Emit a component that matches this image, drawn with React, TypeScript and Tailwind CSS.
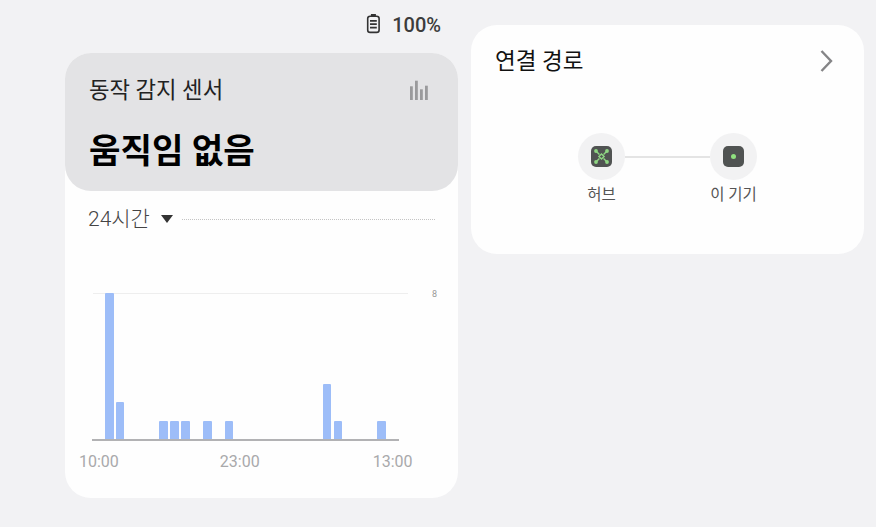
const bars = [8, 2, 0, 0, 0, 1, 1, 1, 0, 1, 0, 1, 0, 0, 0, 0, 0, 0, 0, 0, 3, 1, 0, 0, 0, 1];
const UNIT = 18.3;

function BatteryIcon() {
  return (
    <svg width="16" height="22" viewBox="0 0 16 22" fill="none" stroke="#333" strokeWidth="1.6">
      <path d="M4.9 1h5v2.2h-5z" fill="#333" stroke="none" />
      <rect x="1.7" y="3.2" width="11.4" height="16.2" rx="2.4" />
      <path d="M4 7.8h6.8M4 11.2h6.8M4 14.6h6.8" strokeWidth="1.7" />
    </svg>
  );
}

function StatsIcon() {
  return (
    <svg width="20" height="20" viewBox="0 0 20 20" fill="#9a9a9c">
      <rect x="1" y="6.3" width="2.8" height="13.7" />
      <rect x="6" y="0.7" width="2.8" height="19.3" />
      <rect x="11" y="9.3" width="2.8" height="10.7" />
      <rect x="16" y="5.7" width="2.8" height="14.3" />
    </svg>
  );
}

function HubIcon() {
  return (
    <div className="flex h-[21px] w-[21px] items-center justify-center rounded-[5px] bg-[#505352]">
      <svg width="17" height="17" viewBox="0 0 17 17" fill="#8fd683" stroke="#8fd683" strokeWidth="1.4">
        <path d="M3 3l3.4 3.4M14 3l-3.4 3.4M3 14l3.4-3.4M14 14l-3.4-3.4M8.5 5.9l2.6 2.6-2.6 2.6-2.6-2.6z" fill="none" />
        <circle cx="3" cy="3" r="1.9" stroke="none" />
        <circle cx="14" cy="3" r="1.9" stroke="none" />
        <circle cx="3" cy="14" r="1.9" stroke="none" />
        <circle cx="14" cy="14" r="1.9" stroke="none" />
      </svg>
    </div>
  );
}

function DeviceIcon() {
  return (
    <div className="flex h-[21px] w-[21px] items-center justify-center rounded-[5px] bg-[#505352]">
      <div className="h-[5px] w-[5px] rounded-full bg-[#8fe07f]" />
    </div>
  );
}

function Node({ label, children }: { label: string; children: React.ReactNode }) {
  return (
    <div className="flex w-[47px] flex-col items-center">
      <div className="flex h-[47px] w-[47px] items-center justify-center rounded-full bg-[#f2f2f3]">{children}</div>
      <div className="mt-[3px] whitespace-nowrap text-[15.5px] leading-[24px] text-[#555]">{label}</div>
    </div>
  );
}

export default function App() {
  return (
    <div className="flex h-[527px] w-[876px] gap-[13px] overflow-hidden bg-[#f2f2f4] pl-[65px] font-['Roboto','Noto_Sans_CJK_KR',sans-serif]">
      <div className="flex w-[393px] flex-col">
        <div className="flex h-[53px] items-start justify-end gap-[10px] pr-[17px] pt-[13px]">
          <BatteryIcon />
          <span className="text-[20px] font-medium leading-[24px] text-[#3c3c3c]">100%</span>
        </div>

        <div className="h-[445px] rounded-[26px] bg-[#fefefe]">
          <div className="flex h-[138px] flex-col rounded-[26px] bg-[#e3e3e5] px-[24px] pt-[21px]">
            <div className="flex items-center justify-between pr-[5px]">
              <span className="text-[22.3px] leading-[32px] text-[#222]">동작 감지 센서</span>
              <StatsIcon />
            </div>
            <div className="mt-[21px] text-[34.2px] font-bold leading-[48px] text-black">움직임 없음</div>
          </div>

          <div className="flex items-center pl-[23px] pr-[23px] pt-[13px]">
            <span className="text-[21px] font-light leading-[30px] text-[#444]">24시간</span>
            <svg className="ml-[11px]" width="12" height="8" viewBox="0 0 12 8" fill="#333">
              <path d="M0 0h12L6 8z" />
            </svg>
            <div className="ml-[9px] flex-1 border-t border-dotted border-[#c4c4c4]" />
          </div>

          <div className="mt-[59px]">
            <div className="flex h-px items-center pl-[28px]">
              <div className="h-px w-[315px] shrink-0 bg-[#eeeeee]" />
              <span className="ml-[24px] text-[9px] leading-[10px] text-[#999]">8</span>
            </div>
            <div className="ml-[27px] flex h-[147px] w-[307px] items-end border-b-2 border-[#b2b2b4] pl-[13px]">
              {bars.map((v, i) => (
                <div key={i} className="w-[10.9px] shrink-0">
                  {v > 0 && <div className="w-[8.6px] rounded-t-[1px] bg-[#9dbdf8]" style={{ height: v * UNIT }} />}
                </div>
              ))}
            </div>
            <div className="mt-[9px] flex pl-[14px] text-[16px] leading-[24px] text-[#a9a9ab]">
              <span>10:00</span>
              <span className="ml-[101px]">23:00</span>
              <span className="ml-[113px]">13:00</span>
            </div>
          </div>
        </div>
      </div>

      <div className="mt-[25px] h-[229px] w-[393px] rounded-[26px] bg-[#fefefe]">
        <div className="flex items-center justify-between pl-[24px] pr-[30px] pt-[20px]">
          <span className="text-[22.5px] leading-[32px] text-[#111]">연결 경로</span>
          <svg width="14" height="24" viewBox="0 0 14 24" fill="none" stroke="#858587" strokeWidth="2.4">
            <path d="M1.5 2l9.5 10-9.5 10" />
          </svg>
        </div>
        <div className="mt-[56px] flex justify-center">
          <Node label="허브"><HubIcon /></Node>
          <div className="mt-[23px] h-[2px] w-[85px] bg-[#e4e4e4]" />
          <Node label="이 기기"><DeviceIcon /></Node>
        </div>
      </div>
    </div>
  );
}
